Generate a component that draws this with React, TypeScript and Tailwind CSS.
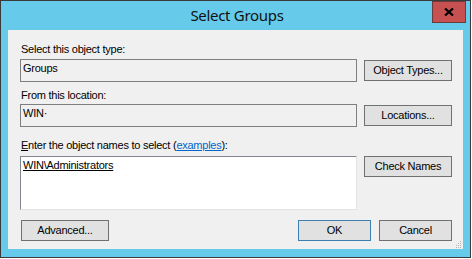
export default function App() {
  const body = { fontFamily: '"Liberation Sans", Arial, sans-serif' };
  return (
    <div className="w-[472px] h-[259px] bg-white text-[11px] tracking-[-0.25px] text-black" style={body}>
      <div className="relative w-[471px] h-[258px] border border-[#3a3a3a] bg-[#66cbea] flex flex-col">
        <div
          className="h-[30px] flex items-center justify-center text-[15px] tracking-[-0.3px] text-[#111] pl-[3px]"
          style={{ fontFamily: '"Noto Sans", "Open Sans", sans-serif' }}
        >
          Select Groups
        </div>
        <div className="absolute top-0 right-[4px] w-[34px] h-[22px] bg-[#c75050] border border-[#6b3a3a] flex items-center justify-center">
          <svg width="10" height="8" viewBox="0 0 10 8">
            <path d="M1 0.5 L9 7.5 M9 0.5 L1 7.5" stroke="#000" strokeWidth="2.2" />
          </svg>
        </div>
        <div className="mx-[7px] mb-[8px] flex-1 bg-[#f0f0f0] flex flex-col pl-[12px] pr-[11px]">
          <div className="mt-[12px] h-[14px] leading-[14px] pl-[1px]">Select this object type:</div>
          <div className="mt-[3px] flex items-center gap-[7px]">
            <div className="w-[337px] h-[23px] border border-[#7f7f7f] pl-[2px] leading-[14px] pt-[1px]">Groups</div>
            <div className="w-[88px] h-[21px] border border-[#707070] bg-[#e1e1e1] flex items-center justify-center">
              Object Types...
            </div>
          </div>
          <div className="mt-[6px] h-[14px] leading-[14px] pl-[1px]">From this location:</div>
          <div className="mt-[2px] flex items-center gap-[7px]">
            <div className="w-[337px] h-[23px] border border-[#7f7f7f] pl-[2px] leading-[14px] pt-[1px]">WIN·</div>
            <div className="w-[88px] h-[21px] border border-[#707070] bg-[#e1e1e1] flex items-center justify-center">
              Locations...
            </div>
          </div>
          <div className="mt-[11px] h-[14px] leading-[14px] pl-[1px]">
            <span className="underline">E</span>nter the object names to select (
            <span className="text-[#0066cc] underline">examples</span>):
          </div>
          <div className="mt-[4px] flex items-start gap-[7px]">
            <div className="w-[337px] h-[54px] bg-white border border-t-[#828790] border-l-[#828790] border-r-[#e3e3e3] border-b-[#e3e3e3] pl-[2px] leading-[14px] pt-[1px]">
              <span className="underline">WIN\Administrators</span>
            </div>
            <div className="w-[88px] h-[21px] border border-[#707070] bg-[#e1e1e1] flex items-center justify-center">
              Check Names
            </div>
          </div>
          <div className="mt-[10px] flex items-center">
            <div className="ml-[1px] w-[88px] h-[21px] border border-[#707070] bg-[#e1e1e1] flex items-center justify-center">
              Advanced...
            </div>
            <div className="ml-auto w-[73px] h-[21px] border border-[#3c7fb1] bg-[#e1e1e1] flex items-center justify-center">
              OK
            </div>
            <div className="ml-[8px] w-[73px] h-[21px] border border-[#707070] bg-[#e1e1e1] flex items-center justify-center">
              Cancel
            </div>
          </div>
          <div className="flex-1 flex items-end justify-end -mr-[10px] pb-[1px]">
            <svg width="7" height="7" viewBox="0 0 7 7">
              <rect x="5" y="0" width="1" height="1" fill="#b4b4b4" />
              <rect x="3" y="2" width="1" height="1" fill="#b4b4b4" />
              <rect x="5" y="2" width="1" height="1" fill="#b4b4b4" />
              <rect x="1" y="4" width="1" height="1" fill="#b4b4b4" />
              <rect x="3" y="4" width="1" height="1" fill="#b4b4b4" />
              <rect x="5" y="4" width="1" height="1" fill="#b4b4b4" />
              <rect x="1" y="6" width="1" height="1" fill="#b4b4b4" />
              <rect x="3" y="6" width="1" height="1" fill="#b4b4b4" />
              <rect x="5" y="6" width="1" height="1" fill="#b4b4b4" />
            </svg>
          </div>
        </div>
      </div>
    </div>
  );
}
